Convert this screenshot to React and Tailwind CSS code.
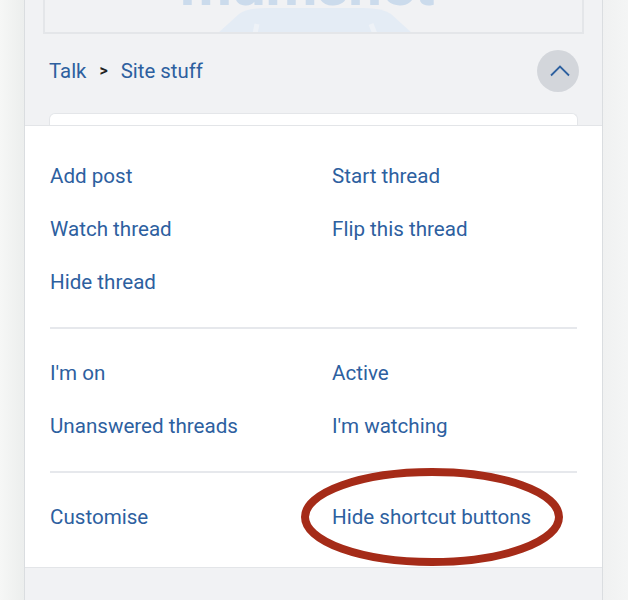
import React from 'react';

const linkCls = 'h-[53px] flex items-center text-[20.6px] text-[#2d609f]';

function LinkGroup({ items }) {
	return (
		<div className="grid grid-cols-[282px_1fr]">
			{items.map((label, i) => (
				<div key={i} className={linkCls}>
					{label}
				</div>
			))}
		</div>
	);
}

function Divider() {
	return <div className="h-[2px] bg-[#e6e8ec] my-[18px]" />;
}

export default function App() {
	return (
		<div
			className="relative w-[628px] h-[600px] overflow-hidden flex bg-[#f3f4f4]"
			style={{ fontFamily: 'Roboto, "Liberation Sans", sans-serif' }}>
			<div className="w-[24px] h-full bg-gradient-to-r from-[#f6f7f6] to-[#eceeed]" />
			<div className="w-[579px] h-full border-x border-[#dadde0] bg-[#f1f2f4] flex flex-col">
				{/* faded banner, scrolled mostly out of view */}
				<div className="relative mx-[18px] h-[34px] border-x-2 border-b-2 border-[#e4e6e9] overflow-hidden">
					<span className="absolute left-[135px] top-[-45px] text-[60px] leading-none font-bold text-[#cbdbec]">
						mumsnet
					</span>
					<svg className="absolute left-[172px] top-[6px]" width="196" height="28" viewBox="0 0 196 28">
						<path d="M0 28 L22 8 Q30 2 50 2 L146 2 Q166 2 174 8 L196 28 Z" fill="#e4ecf5" />
						<path d="M38 28 L40 18 M158 28 L154 18" stroke="#eef2f7" strokeWidth="5" />
					</svg>
				</div>

				{/* breadcrumb */}
				<div className="flex items-center justify-between pl-[24px] pr-[23px] pt-[16px] pb-[21px]">
					<div className="flex items-center text-[20.4px] text-[#2d609f]">
						<span>Talk</span>
						<span className="mx-[13px] text-[16px] font-bold text-[#222]">&gt;</span>
						<span>Site stuff</span>
					</div>
					<button className="w-[42px] h-[42px] rounded-full bg-[#d3d6db] flex items-center justify-center">
						<svg width="20" height="12" viewBox="0 0 20 12" className="ml-[3px]">
							<path d="M1 10.5 L10 1.5 L19 10.5" fill="none" stroke="#2d609f" strokeWidth="1.8" />
						</svg>
					</button>
				</div>

				{/* card behind */}
				<div className="mx-[24px] h-[12px] bg-white border-x border-t border-[#e4e6e9] rounded-t-md" />

				{/* shortcut panel */}
				<div className="h-[443px] bg-white border-y border-[#e3e5e8] px-[25px] pt-[24px] pb-[23px]">
					<LinkGroup items={['Add post', 'Start thread', 'Watch thread', 'Flip this thread', 'Hide thread']} />
					<Divider />
					<LinkGroup items={["I'm on", 'Active', 'Unanswered threads', "I'm watching"]} />
					<Divider />
					<LinkGroup items={['Customise', 'Hide shortcut buttons']} />
				</div>
			</div>
			<div className="flex-1 h-full bg-gradient-to-r from-[#f0f1f1] to-[#f4f5f5]" />

			{/* annotation */}
			<svg className="absolute left-0 top-0 pointer-events-none" width="628" height="600">
				<ellipse cx="432" cy="517" rx="127" ry="45" fill="none" stroke="#a52b18" strokeWidth="8" />
			</svg>
		</div>
	);
}
